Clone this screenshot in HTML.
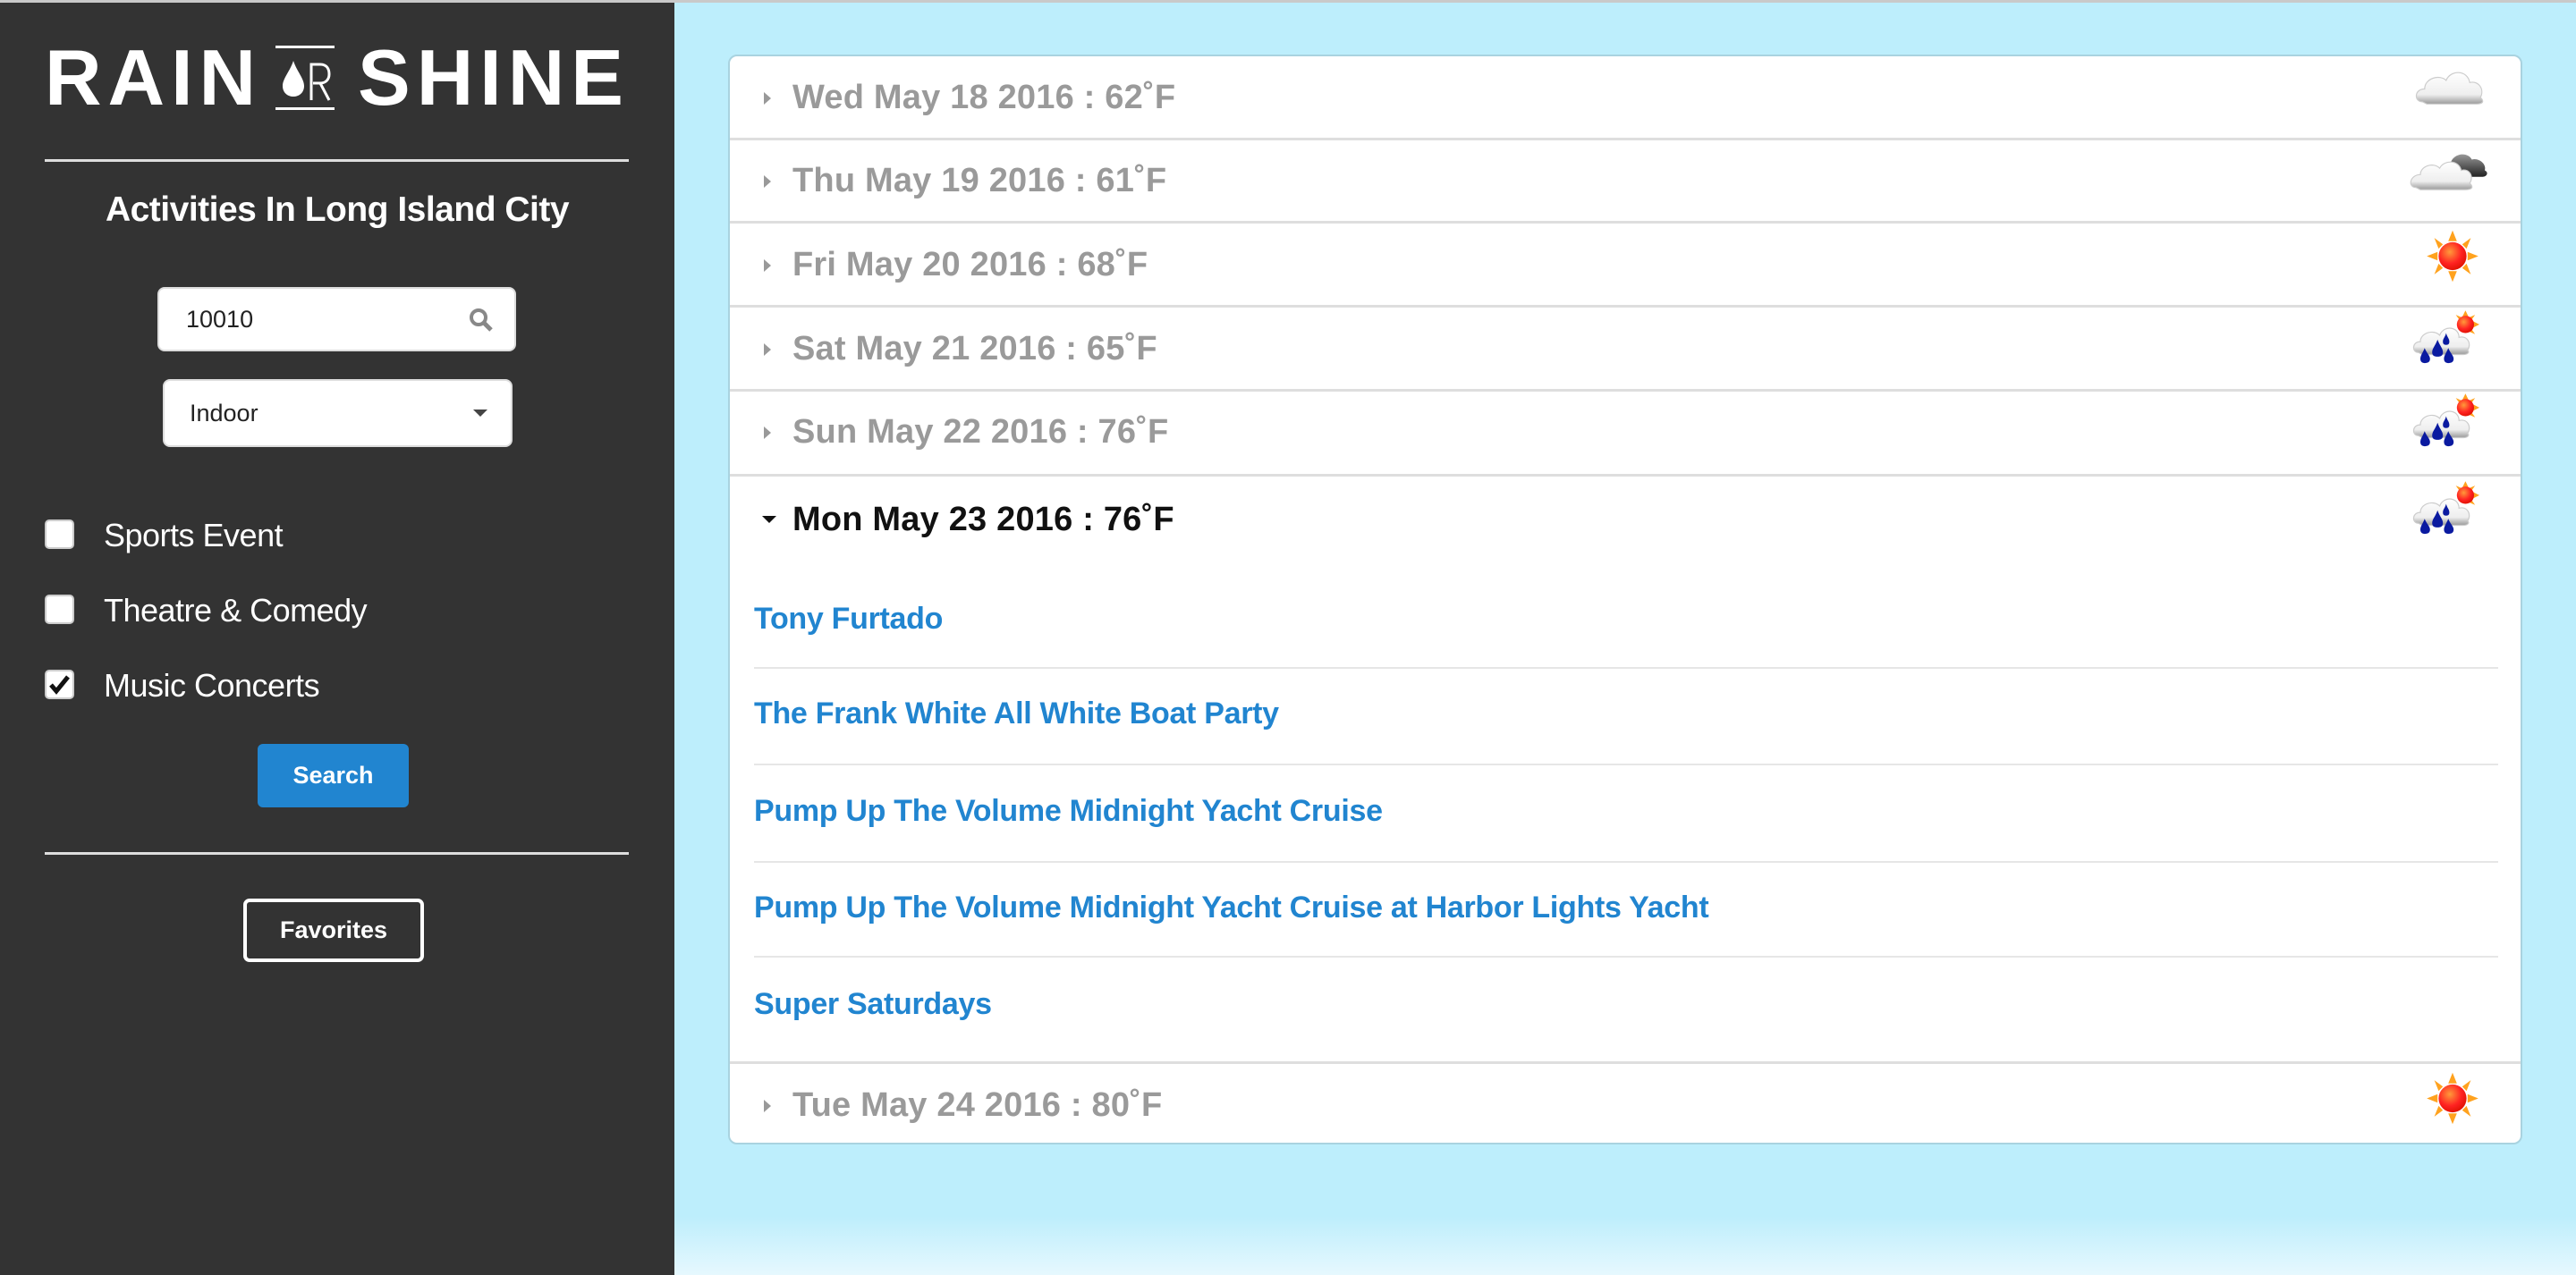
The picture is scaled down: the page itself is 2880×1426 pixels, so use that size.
<!DOCTYPE html>
<html><head><meta charset="utf-8"><style>
*{box-sizing:border-box;margin:0;padding:0}
html,body{width:2880px;height:1426px;overflow:hidden;font-family:"Liberation Sans",sans-serif}
body{background:#bdeefc;position:relative}
.side{position:absolute;left:0;top:3px;width:754px;height:1423px;background:#333333}
.topline{position:absolute;left:0;top:0;width:2880px;height:3px;background:#c9c9c9}
.abs{position:absolute}
.logo{position:absolute;top:50px;color:#fff;font-weight:bold;font-size:88px;line-height:72px;height:72px;letter-spacing:7px}
.hr{position:absolute;left:50px;width:653px;height:3px;background:#ddd}
.h{position:absolute;left:0;width:754px;text-align:center;top:210px;color:#fff;font-weight:bold;font-size:39px;letter-spacing:-0.5px}
.inp{position:absolute;background:#fff;border:2px solid #ddd;border-radius:8px;color:#222;font-size:27px}
.cb{position:absolute;left:50px;width:33px;height:33px;background:#fff;border:2px solid #ccc;border-radius:5px}
.lbl{position:absolute;left:116px;color:#fff;font-size:36px;letter-spacing:-0.5px}
.card{position:absolute;left:814px;top:61px;width:2006px;height:1219px;background:#fff;border:2px solid #a9d3e0;border-radius:10px;overflow:hidden}
.row{position:absolute;left:0;width:2002px;height:94px;border-bottom:3px solid #dedede}
.row .t{position:absolute;left:70px;top:0;line-height:92px;font-size:38px;font-weight:bold;color:#9a9a9a;letter-spacing:0.2px}
.row .a{position:absolute;left:38px;top:40px;width:0;height:0;border-top:7px solid transparent;border-bottom:7px solid transparent;border-left:8px solid #999}
.ic{position:absolute;left:1878px;width:96px;height:77px}
.ev{position:absolute;left:27px;font-size:34px;font-weight:bold;color:#2185d0;letter-spacing:-0.3px}
.sep{position:absolute;left:27px;width:1950px;height:2px;background:#e6e6e6}
</style></head><body>
<div class="topline"></div>
<div class="side">
  <div class="logo" style="left:50px;top:48px">RAIN</div>
  <div class="abs" style="left:308px;top:48px;width:66px;height:72px;border-top:3px solid #fff;border-bottom:3px solid #fff">
    <svg width="66" height="66" viewBox="0 0 66 66" style="position:absolute;left:0;top:0">
      <path d="M20 14 C16 26 8 34 8 42 C8 50 14 54 20 54 C26 54 32 50 32 42 C32 34 24 26 20 14Z" fill="#fff"/>
      <path d="M40 58 V18 H50 C58 18 60 24 60 29 C60 35 56 39 50 39 H42 M50 39 L60 58" stroke="#fff" stroke-width="3" fill="none"/>
    </svg>
  </div>
  <div class="logo" style="left:400px;top:48px">SHINE</div>
  <div class="hr" style="top:175px"></div>
  <div class="h">Activities In Long Island City</div>
  <div class="inp" style="left:176px;top:318px;width:401px;height:72px;line-height:68px;padding-left:30px">10010
    <svg width="30" height="30" viewBox="0 0 30 30" style="position:absolute;right:22px;top:20px"><circle cx="12" cy="12" r="8" stroke="#888" stroke-width="4" fill="none"/><path d="M18 18 L26 26" stroke="#888" stroke-width="5"/></svg>
  </div>
  <div class="inp" style="left:182px;top:421px;width:391px;height:76px;line-height:72px;padding-left:28px">Indoor
    <div class="abs" style="right:26px;top:32px;border-left:8px solid transparent;border-right:8px solid transparent;border-top:8px solid #444"></div>
  </div>
  <div class="cb" style="top:578px"></div><div class="lbl" style="top:575px">Sports Event</div>
  <div class="cb" style="top:662px"></div><div class="lbl" style="top:659px">Theatre &amp; Comedy</div>
  <div class="cb" style="top:746px"><svg width="29" height="29" viewBox="0 0 29 29"><path d="M5 15 L11 22 L24 6" stroke="#111" stroke-width="5" fill="none"/></svg></div><div class="lbl" style="top:743px">Music Concerts</div>
  <div class="abs" style="left:288px;top:829px;width:169px;height:71px;background:#2185d0;border-radius:6px;color:#fff;font-weight:bold;font-size:27px;text-align:center;line-height:71px">Search</div>
  <div class="hr" style="top:950px"></div>
  <div class="abs" style="left:272px;top:1002px;width:202px;height:71px;border:4px solid #fff;border-radius:7px;color:#fff;font-weight:bold;font-size:27px;text-align:center;line-height:63px">Favorites</div>
</div>

<svg width="0" height="0" style="position:absolute">
  <defs>
    <linearGradient id="cg" x1="0" y1="0" x2="0" y2="1"><stop offset="0" stop-color="#fff"/><stop offset=".7" stop-color="#eee"/><stop offset="1" stop-color="#999"/></linearGradient>
    <linearGradient id="dg" x1="0" y1="0" x2="0" y2="1"><stop offset="0" stop-color="#999"/><stop offset="1" stop-color="#222"/></linearGradient>
    <radialGradient id="sg" cx=".4" cy=".35" r=".7"><stop offset="0" stop-color="#ff9a3a"/><stop offset=".6" stop-color="#f22"/><stop offset="1" stop-color="#d10"/></radialGradient>
    <symbol id="cloud" viewBox="0 0 80 64"><path d="M12 44 C4 44 4 32 14 32 C14 22 28 18 34 24 C38 14 54 14 56 26 C64 24 70 32 66 40 C70 44 68 46 62 46 L16 46 Z" fill="url(#cg)" stroke="#ccc"/></symbol>
    <symbol id="cloud2" viewBox="0 0 80 64"><path d="M38 26 C40 16 54 14 58 22 C64 20 72 26 70 32 C74 34 72 38 68 38 L44 38Z" fill="url(#dg)"/><path d="M6 48 C-2 48 0 36 10 36 C10 28 22 24 28 30 C32 22 46 22 48 32 C56 30 60 38 56 44 C60 48 58 50 52 50 L10 50Z" fill="url(#cg)" stroke="#ccc"/></symbol>
    <symbol id="sun" viewBox="0 0 80 64"><g fill="#ffa21e"><path d="M40 8 L44 18 L36 18Z"/><path d="M40 56 L44 46 L36 46Z"/><path d="M16 32 L26 28 L26 36Z"/><path d="M64 32 L54 28 L54 36Z"/><path d="M23 15 L31 21 L27 25Z"/><path d="M57 15 L49 21 L53 25Z"/><path d="M23 49 L31 43 L27 39Z"/><path d="M57 49 L49 43 L53 39Z"/></g><circle cx="40" cy="32" r="13" fill="url(#sg)"/></symbol>
    <symbol id="rain" viewBox="0 0 80 64"><g transform="translate(52 14)"><g fill="#ffa21e"><path d="M0 -13 L3 -7 L-3 -7Z"/><path d="M13 0 L7 3 L7 -3Z"/><path d="M9 -9 L4 -2 L2 -6Z"/><path d="M9 9 L4 2 L2 6Z"/><path d="M-9 -9 L-4 -2 L-2 -6Z"/></g><circle r="8" fill="url(#sg)"/></g><path d="M8 40 C2 40 2 30 10 30 C10 22 22 18 28 24 C32 14 46 16 46 26 C54 24 58 32 54 38 C56 40 54 42 50 42 L12 42Z" fill="url(#cg)" stroke="#ccc"/><g fill="#0a1aa0"><path d="M26 28 C24 34 21 36 21 40 C21 43 23 44 26 44 C29 44 31 43 31 40 C31 36 28 34 26 28Z"/><path d="M14 36 C12 41 10 43 10 46 C10 49 12 50 14 50 C17 50 19 49 19 46 C19 43 16 41 14 36Z"/><path d="M36 36 C34 41 32 43 32 46 C32 49 34 50 36 50 C39 50 41 49 41 46 C41 43 38 41 36 36Z"/><path d="M34 22 C33 26 31 27 31 30 C31 32 32 33 34 33 C36 33 37 32 37 30 C37 27 35 26 34 22Z"/></g></symbol>
  </defs>
</svg>

<div class="card">
  <div class="row" style="top:0"><div class="a"></div><div class="t">Wed May 18 2016 : 62˚F</div><svg class="ic" style="top:-2px"><use href="#cloud"/></svg></div>
  <div class="row" style="top:93px"><div class="a"></div><div class="t">Thu May 19 2016 : 61˚F</div><svg class="ic" style="top:-4px"><use href="#cloud2"/></svg></div>
  <div class="row" style="top:187px"><div class="a"></div><div class="t">Fri May 20 2016 : 68˚F</div><svg class="ic" style="top:-2px"><use href="#sun"/></svg></div>
  <div class="row" style="top:281px"><div class="a"></div><div class="t">Sat May 21 2016 : 65˚F</div><svg class="ic" style="top:2px"><use href="#rain"/></svg></div>
  <div class="row" style="top:374px;height:96px"><div class="a"></div><div class="t">Sun May 22 2016 : 76˚F</div><svg class="ic" style="top:2px"><use href="#rain"/></svg></div>
  <div class="abs" style="left:0;top:470px;width:2002px;height:657px;border-bottom:3px solid #dedede">
    <div class="abs" style="left:36px;top:44px;border-left:8px solid transparent;border-right:8px solid transparent;border-top:8px solid #111"></div>
    <div class="abs" style="left:70px;top:2px;line-height:92px;font-size:38px;font-weight:bold;color:#111;letter-spacing:0.2px">Mon May 23 2016 : 76˚F</div>
    <svg class="ic" style="top:4px"><use href="#rain"/></svg>
    <div class="ev" style="top:140px">Tony Furtado</div>
    <div class="sep" style="top:213px"></div>
    <div class="ev" style="top:246px">The Frank White All White Boat Party</div>
    <div class="sep" style="top:321px"></div>
    <div class="ev" style="top:355px">Pump Up The Volume Midnight Yacht Cruise</div>
    <div class="sep" style="top:430px"></div>
    <div class="ev" style="top:463px">Pump Up The Volume Midnight Yacht Cruise at Harbor Lights Yacht</div>
    <div class="sep" style="top:536px"></div>
    <div class="ev" style="top:571px">Super Saturdays</div>
  </div>
  <div class="row" style="top:1127px;border-bottom:none"><div class="a"></div><div class="t">Tue May 24 2016 : 80˚F</div><svg class="ic" style="top:0px"><use href="#sun"/></svg></div>
</div>
<div class="abs" style="left:754px;top:1360px;width:2126px;height:66px;background:linear-gradient(#bdeefc00,#e6f8fe)"></div>
</body></html>
